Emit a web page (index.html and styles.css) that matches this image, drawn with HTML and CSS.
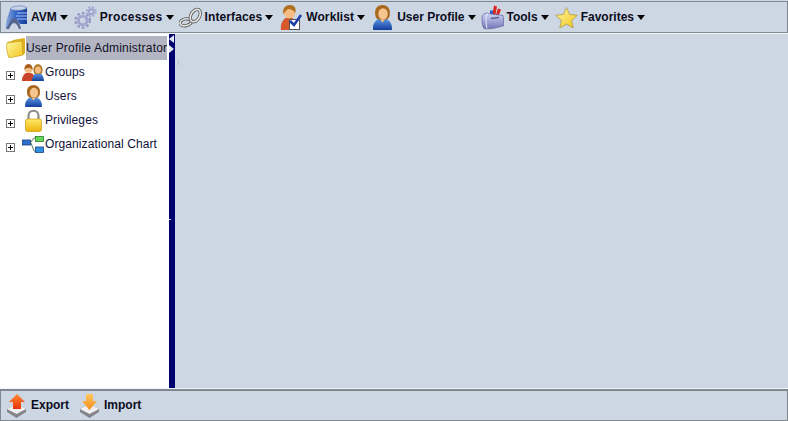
FILE: index.html
```html
<!DOCTYPE html>
<html>
<head>
    <meta charset="UTF-8">
    <title>User Profile Administrator</title>
    <link rel="stylesheet" href="styles.css">
</head>
<body>
    <svg class="defs" width="0" height="0">
        <defs>
            <linearGradient id="g-blue" x1="0" y1="0" x2="0" y2="1"><stop offset="0" stop-color="#5f9ae8"/><stop offset="1" stop-color="#123f9c"/></linearGradient>
            <linearGradient id="g-db" x1="0" y1="0" x2="1" y2="0"><stop offset="0" stop-color="#8fa8d8"/><stop offset=".5" stop-color="#2f62c8"/><stop offset="1" stop-color="#1a3f9a"/></linearGradient>
            <linearGradient id="g-yellow" x1="0" y1="0" x2="1" y2="1"><stop offset="0" stop-color="#fff8a8"/><stop offset="1" stop-color="#f2c414"/></linearGradient>
            <linearGradient id="g-lock" x1="0" y1="0" x2="0" y2="1"><stop offset="0" stop-color="#ffe96a"/><stop offset="1" stop-color="#eeb40c"/></linearGradient>
            <linearGradient id="g-orange" x1="0" y1="0" x2="0" y2="1"><stop offset="0" stop-color="#ff8a30"/><stop offset="1" stop-color="#e8300c"/></linearGradient>
            <linearGradient id="g-amber" x1="0" y1="0" x2="0" y2="1"><stop offset="0" stop-color="#ffc860"/><stop offset="1" stop-color="#f58a18"/></linearGradient>
            <linearGradient id="g-lilac" x1="0" y1="0" x2="0" y2="1"><stop offset="0" stop-color="#d0d4f4"/><stop offset="1" stop-color="#7478b8"/></linearGradient>
            <symbol id="i-person" viewBox="0 0 20 24">
                <path d="M1 24c-1-6 3-10 6-11l3 3 3-3c3 1 7 5 6 11z" fill="url(#g-blue)"/>
                <path d="M8 12h4v2l-2 3-2-3z" fill="#f3bd83"/>
                <path d="M3 9C2 3 6 0 10 0s8 3 7 9c0 3-2 4-3 5h-8c-1-1-3-2-3-5z" fill="#a8691f"/>
                <ellipse cx="10.500" cy="8.500" rx="4.500" ry="5.500" fill="#f6c48e"/>
            </symbol>
            <symbol id="i-check" viewBox="0 0 21 25">
                <path d="M0 25c-1-6 2-11 5-12h6c3 1 4 4 4 12z" fill="#d5592a"/>
                <ellipse cx="8.500" cy="7" rx="6" ry="6.500" fill="#f3bd83"/>
                <path d="M2.500 9C1 3 5 0 9 0s7 3 5 8c-1-3-5-4-7-4-2 1-3 3-4.500 5z" fill="#b0701f"/>
                <rect x="8.500" y="14.500" width="10" height="10" fill="#fff" stroke="#555"/>
                <path d="M9 16l4 4 7-10" fill="none" stroke="#1f3fa8" stroke-width="2.600"/>
            </symbol>
            <symbol id="i-db" viewBox="0 0 23 25">
                <path d="M5 5C6 2 18 1 22 3v16h-7C13 15 11 14 9 14 7 16 5 21 1 24 0 18 3 11 5 5z" fill="url(#g-db)"/>
                <path d="M5 4c3-4 14-4 17-1-3 3-14 3-17 1z" fill="#c5d2ea" stroke="#5a70a8" stroke-width=".6"/>
                <path d="M12 8h10M11 11h11M12 14h10" stroke="#a9c6ff"/>
                <path d="M1 24C4 19 6 13 9 13c3 0 6 5 7 11h-2c-1-3-3-6-5-6s-4 4-5 6z" fill="#56688f"/>
            </symbol>
            <symbol id="i-gears" viewBox="0 0 24 24">
                <circle cx="9" cy="15" r="4.500" fill="none" stroke="#a2a6d0" stroke-width="3"/>
                <circle cx="9" cy="15" r="7.500" fill="none" stroke="#9296c4" stroke-width="2.400" stroke-dasharray="2.800 2.100"/>
                <circle cx="18" cy="6" r="2.600" fill="none" stroke="#9da2cc" stroke-width="2"/>
                <circle cx="18" cy="6" r="4.800" fill="none" stroke="#a5a9d0" stroke-width="1.900" stroke-dasharray="2.200 1.600"/>
            </symbol>
            <symbol id="i-chain" viewBox="0 0 24 20">
                <ellipse cx="7" cy="15" rx="6" ry="3.500" transform="rotate(-12 7 15)" fill="none" stroke="#5a5a5a" stroke-width="3.400"/>
                <ellipse cx="7" cy="15" rx="6" ry="3.500" transform="rotate(-12 7 15)" fill="none" stroke="#e4e4e4" stroke-width="1.700"/>
                <ellipse cx="17" cy="8" rx="4.500" ry="7" transform="rotate(30 17 8)" fill="none" stroke="#5a5a5a" stroke-width="3.400"/>
                <ellipse cx="17" cy="8" rx="4.500" ry="7" transform="rotate(30 17 8)" fill="none" stroke="#e4e4e4" stroke-width="1.700"/>
            </symbol>
            <symbol id="i-tools" viewBox="0 0 23 24">
                <path d="M13 0l3 1-2 11h-3zM17 3l3 1-3 8h-3z" fill="#d8261e"/>
                <path d="M9 5h3v8H9z" fill="#2a5fc0"/>
                <path d="M1 11c1-3 5-4 6-3l15 2 1 10c-6 2-14 4-20 3-2-3-2-8-2-12z" fill="url(#g-lilac)" stroke="#5a5e98" stroke-width=".7"/>
                <path d="M7 8c-3 3-2 11-1 15" fill="none" stroke="#eef0ff"/>
                <path d="M10 13l8-1" stroke="#5a5e98" stroke-width="1.400"/>
            </symbol>
            <symbol id="i-star" viewBox="0 0 24 23">
                <path d="M12 1l3.300 7.300 8 .9-6 5.300 1.700 7.900-7-4-7 4 1.700-7.900-6-5.300 8-.9z" fill="url(#g-yellow)" stroke="#a89640" stroke-width=".8"/>
            </symbol>
            <symbol id="i-folder" viewBox="0 0 20 20">
                <path d="M1 4l5-1 1-1 11-2 1 1v14l-2 2z" fill="#e0b020"/>
                <path d="M1 5l15-2 1 14-14 3C1 15 0 9 1 5z" fill="url(#g-yellow)" stroke="#c9a020" stroke-width=".7"/>
            </symbol>
            <symbol id="i-groups" viewBox="0 0 22 17">
                <path d="M0 17c-.5-4 2-7 4-8h5c3 1 4 4 4 8z" fill="#c8452a"/>
                <circle cx="6.500" cy="5" r="4" fill="#f3bd83"/>
                <path d="M2.500 6c-1-8 9-8 8 0-2-3-6-3-8 0z" fill="#a8601f"/>
                <path d="M10 17c0-4 2-7 4-8h4c2 1 4 4 4 8z" fill="url(#g-blue)"/>
                <path d="M11.500 7c-1-9 10-9 9 0 0 2-1 3-2 3h-5c-1 0-2-1-2-3z" fill="#b07a2a"/>
                <ellipse cx="16" cy="6" rx="3" ry="3.500" fill="#f3bd83"/>
            </symbol>
            <symbol id="i-lock" viewBox="0 0 17 23">
                <path d="M3.500 11V7c0-7 10-7 10 0v4" fill="none" stroke="#8a8a8a" stroke-width="2.200"/>
                <rect x=".5" y="10" width="16" height="12.500" rx="2" fill="url(#g-lock)" stroke="#c89a10" stroke-width=".7"/>
            </symbol>
            <symbol id="i-org" viewBox="0 0 22 17">
                <path d="M9 6l3-4h3M9 7l3 8h3" stroke="#5a7a5a" fill="none"/>
                <rect x=".5" y="4" width="8" height="5" fill="#2f6fd0" stroke="#1c3f80" stroke-width=".8"/>
                <rect x="13.500" y=".5" width="8" height="5" fill="#66d458" stroke="#2a7f2a" stroke-width=".8"/>
                <rect x="13.500" y="11" width="8" height="5.500" fill="#2f8fe0" stroke="#1c3f80" stroke-width=".8"/>
            </symbol>
            <symbol id="i-export" viewBox="0 0 19 24">
                <path d="M0 15l9.500-5 9.500 5v3l-9.500 6L0 18z" fill="#84848a"/>
                <path d="M0 15l9.500-5 9.500 5-9.500 5z" fill="#f0f0f0"/>
                <path d="M10 0l8 8h-4v7H6V8H2z" fill="url(#g-orange)"/>
            </symbol>
            <symbol id="i-import" viewBox="0 0 19 24">
                <path d="M0 15l9.500-5 9.500 5v3l-9.500 6L0 18z" fill="#84848a"/>
                <path d="M0 15l9.500-5 9.500 5-9.500 5z" fill="#f0f0f0"/>
                <path d="M6 0h7v7h4l-7.500 9L2 7h4z" fill="url(#g-amber)"/>
            </symbol>
        </defs>
    </svg>

    <!-- Barra de menu -->
    <div class="toolbar">
        <div class="menu menu-avm"><svg class="ico"><use href="#i-db"/></svg><span>AVM</span><i class="caret"></i></div>
        <div class="menu menu-proc"><svg class="ico"><use href="#i-gears"/></svg><span>Processes</span><i class="caret"></i></div>
        <div class="menu menu-inter"><svg class="ico"><use href="#i-chain"/></svg><span>Interfaces</span><i class="caret"></i></div>
        <div class="menu menu-work"><svg class="ico"><use href="#i-check"/></svg><span>Worklist</span><i class="caret"></i></div>
        <div class="menu menu-user"><svg class="ico"><use href="#i-person"/></svg><span>User Profile</span><i class="caret"></i></div>
        <div class="menu menu-tools"><svg class="ico"><use href="#i-tools"/></svg><span>Tools</span><i class="caret"></i></div>
        <div class="menu menu-fav"><svg class="ico"><use href="#i-star"/></svg><span>Favorites</span><i class="caret"></i></div>
    </div>

    <div class="main">
        <!-- Arbol -->
        <div class="tree">
            <div class="tree-root">
                <svg class="ico-folder"><use href="#i-folder"/></svg>
                <span class="selected">User Profile Administrator</span>
            </div>
            <div class="tree-row"><i class="plus"></i><svg class="ico-groups"><use href="#i-groups"/></svg><span>Groups</span></div>
            <div class="tree-row"><i class="plus"></i><svg class="ico-person"><use href="#i-person"/></svg><span>Users</span></div>
            <div class="tree-row"><i class="plus"></i><svg class="ico-lock"><use href="#i-lock"/></svg><span>Privileges</span></div>
            <div class="tree-row"><i class="plus"></i><svg class="ico-org"><use href="#i-org"/></svg><span>Organizational Chart</span></div>
        </div>

        <div class="splitter">
            <i class="arrow-left"></i>
            <i class="arrow-right"></i>
            <i class="grip"></i>
        </div>

        <div class="content"><i class="tick"></i></div>
    </div>

    <div class="bottombar">
        <div class="action"><svg class="ico-action"><use href="#i-export"/></svg><span>Export</span></div>
        <div class="action"><svg class="ico-action"><use href="#i-import"/></svg><span>Import</span></div>
    </div>
</body>
</html>
```

FILE: styles.css
```css
html, body {
    margin: 0;
    padding: 0;
    height: 100%;
    overflow: hidden;
}

body {
    display: flex;
    flex-direction: column;
    width: 788px;
    height: 421px;
    font-family: "Liberation Sans", Arial, sans-serif;
    font-size: 12px;
    color: #000;
    background-color: #cdd7e4;
}

.defs {
    position: absolute;
}

.toolbar {
    display: flex;
    align-items: center;
    box-sizing: border-box;
    height: 32px;
    margin-top: 1px;
    padding-left: 4px;
    background-color: #cdd7e4;
    border: 1px solid #808890;
}

.menu {
    display: flex;
    align-items: center;
    font-weight: bold;
    color: #0c0c20;
}

.menu span {
    margin-top: -1px;
}

.ico {
    width: 23px;
    height: 25px;
    margin-right: 3px;
}

.caret {
    width: 0;
    height: 0;
    margin-left: 3px;
    border-left: 4px solid transparent;
    border-right: 4px solid transparent;
    border-top: 5px solid #000;
}

.menu-avm { margin-right: 6px; }
.menu-proc { margin-right: 5px; letter-spacing: 0.3px; }
.menu-inter { margin-right: 7px; letter-spacing: 0.1px; }
.menu-work { margin-right: 6px; letter-spacing: 0.1px; }
.menu-user { margin-right: 5px; }
.menu-tools { margin-right: 6px; }

.main {
    display: flex;
    flex: 1;
    min-height: 0;
    border-top: 1px solid #f2f5f9;
    border-bottom: 1px solid #f2f5f9;
}

.tree {
    width: 169px;
    box-sizing: border-box;
    padding-top: 2px;
    background-color: #fff;
    letter-spacing: 0.1px;
    color: #10103a;
}

.tree-root {
    display: flex;
    align-items: center;
    height: 24px;
    padding-left: 6px;
    letter-spacing: 0.2px;
}

.ico-folder {
    width: 20px;
    height: 20px;
}

.selected {
    display: flex;
    align-items: center;
    width: 141px;
    height: 24px;
    white-space: nowrap;
    background-color: #b3b6c2;
    color: #101028;
}

.tree-row {
    display: flex;
    align-items: center;
    position: relative;
    height: 24px;
    padding-left: 22px;
}

.tree-row span {
    margin-left: 1px;
}

.plus {
    position: absolute;
    left: 6px;
    top: 11px;
    box-sizing: border-box;
    width: 9px;
    height: 9px;
    border: 1px solid #777;
    background: linear-gradient(#000, #000) center / 5px 1px no-repeat,
                linear-gradient(#000, #000) center / 1px 5px no-repeat,
                #fff;
}

.tree-row svg {
    flex: none;
}

.ico-groups {
    width: 22px;
    height: 17px;
}

.ico-person {
    width: 19px;
    height: 22px;
    margin-left: 2px;
    margin-right: 1px;
}

.ico-lock {
    width: 17px;
    height: 23px;
    margin-left: 3px;
    margin-right: 2px;
}

.ico-org {
    width: 22px;
    height: 17px;
}

.splitter {
    position: relative;
    width: 6px;
    background-color: #00006e;
}

.arrow-left,
.arrow-right {
    position: absolute;
    left: 0;
    width: 0;
    height: 0;
    border-top: 4px solid transparent;
    border-bottom: 4px solid transparent;
}

.arrow-left {
    top: 1px;
    border-right: 5px solid #dfe6f0;
}

.arrow-right {
    top: 11px;
    border-left: 5px solid #dfe6f0;
}

.grip {
    position: absolute;
    left: 0;
    top: 185px;
    width: 2px;
    height: 1px;
    background-color: #cdd7e4;
}

.content {
    position: relative;
    flex: 1;
    background-color: #cdd7e4;
}

.tick {
    position: absolute;
    left: 3px;
    top: 27px;
    width: 1px;
    height: 4px;
    background-color: #b5bcc2;
}

.bottombar {
    display: flex;
    align-items: center;
    box-sizing: border-box;
    height: 32px;
    padding-left: 6px;
    gap: 11px;
    background-color: #cdd7e4;
    border: 1px solid #808890;
    border-top-width: 2px;
    font-weight: bold;
    color: #0c0c20;
}

.action {
    display: flex;
    align-items: center;
}

.action span {
    margin-top: -1px;
}

.ico-action {
    width: 19px;
    height: 24px;
    margin-right: 5px;
}
```
